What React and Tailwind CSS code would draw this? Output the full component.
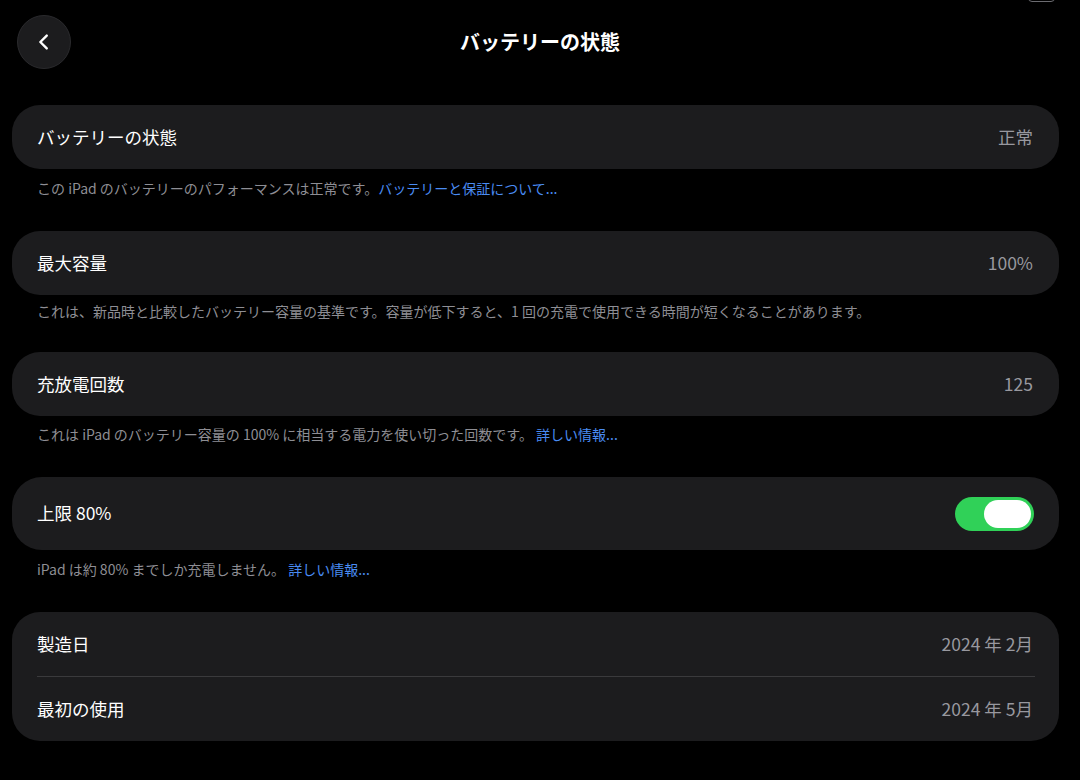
import { useState } from "react";

const font = { fontFamily: '"Noto Sans CJK JP", "Noto Sans", sans-serif' };

function Row({ label, value, children }) {
  return (
    <div className="flex h-[64px] items-center justify-between pl-[25px] pr-[26px]">
      <span className="text-[17.5px] text-white">{label}</span>
      {children ?? <span className="text-[17.5px] text-[#98989f]">{value}</span>}
    </div>
  );
}

function Note({ text, link, className = "" }) {
  return (
    <p className={`pl-[25px] text-[14px] leading-[20px] text-[#8e8e94] ${className}`}>
      {text}
      {link && <span className="text-[#4a8cf3]">{link}</span>}
    </p>
  );
}

function Toggle({ on, onChange }) {
  return (
    <button
      type="button"
      onClick={() => onChange(!on)}
      className={`flex h-[34px] w-[79px] items-center rounded-full p-[3px] ${
        on ? "justify-end bg-[#30d158]" : "justify-start bg-[#39393d]"
      }`}
    >
      <span className="h-[28px] w-[47px] rounded-full bg-white" />
    </button>
  );
}

export default function App() {
  const [limit, setLimit] = useState(true);

  return (
    <div className="relative min-h-[780px] w-[1080px] bg-black" style={font}>
      {/* status bar battery, cut at the top edge */}
      <div className="absolute right-[25px] top-[-10px] h-[12px] w-[27px] rounded-[4px] border border-[#6b6b70]" />

      <header className="grid grid-cols-[1fr_auto_1fr] items-center px-[17px] pt-[15px]">
        <button
          type="button"
          className="flex h-[54px] w-[54px] items-center justify-center rounded-full border border-[#2a2a2d] bg-[#1c1c1e]"
        >
          <svg width="22" height="22" viewBox="0 0 24 24" fill="none" stroke="white" strokeWidth="2.6" strokeLinecap="round" strokeLinejoin="round">
            <path d="M15 5 8 12l7 7" />
          </svg>
        </button>
        <h1 className="text-[20px] font-bold text-white">バッテリーの状態</h1>
        <div />
      </header>

      <main className="pl-[12px] pr-[21px] pt-[36px]">
        <section>
          <div className="rounded-[28px] bg-[#1c1c1e]">
            <Row label="バッテリーの状態" value="正常" />
          </div>
          <Note
            className="mt-[9px]"
            text="この iPad のバッテリーのパフォーマンスは正常です。"
            link="バッテリーと保証について..."
          />
        </section>

        <section className="mt-[33px]">
          <div className="rounded-[28px] bg-[#1c1c1e]">
            <Row label="最大容量" value="100%" />
          </div>
          <Note
            className="mt-[6px]"
            text="これは、新品時と比較したバッテリー容量の基準です。容量が低下すると、1 回の充電で使用できる時間が短くなることがあります。"
          />
        </section>

        <section className="mt-[31px]">
          <div className="rounded-[28px] bg-[#1c1c1e]">
            <Row label="充放電回数" value="125" />
          </div>
          <Note
            className="mt-[8px]"
            text="これは iPad のバッテリー容量の 100% に相当する電力を使い切った回数です。 "
            link="詳しい情報..."
          />
        </section>

        <section className="mt-[33px]">
          <div className="flex h-[73px] items-center justify-between rounded-[30px] bg-[#1c1c1e] pl-[25px] pr-[25px]">
            <span className="text-[17.5px] text-white">上限 80%</span>
            <Toggle on={limit} onChange={setLimit} />
          </div>
          <Note className="mt-[9px]" text="iPad は約 80% までしか充電しません。 " link="詳しい情報..." />
        </section>

        <section className="mt-[33px]">
          <div className="rounded-[28px] bg-[#1c1c1e]">
            <Row label="製造日" value="2024 年 2月" />
            <div className="ml-[25px] mr-[24px] h-px bg-[#3a3a3c]" />
            <Row label="最初の使用" value="2024 年 5月" />
          </div>
        </section>
      </main>
    </div>
  );
}
